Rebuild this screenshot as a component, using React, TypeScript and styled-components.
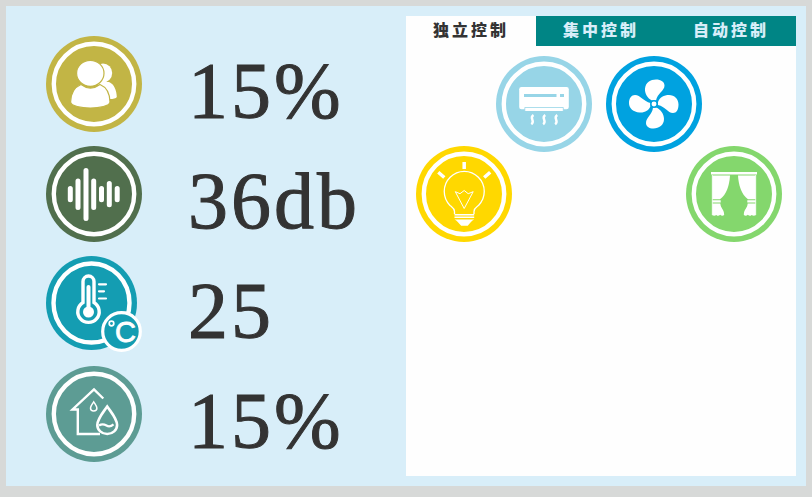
import React, { useState } from "react";
import styled, { createGlobalStyle } from "styled-components";

const GlobalStyle = createGlobalStyle`
  *, *::before, *::after { box-sizing: border-box; }
  body {
    margin: 0;
    background: #d7d9d8;
    color: #333;
    letter-spacing: 3px;
    font-family: "Liberation Sans", "Noto Sans CJK SC", sans-serif;
  }
`;

const Dashboard = styled.main`
  display: grid;
  grid-template-columns: minmax(0, 1fr) minmax(0, 1fr);
  margin: 6px;
  background: #d8eef9;
`;

const Readings = styled.ul`
  display: flex;
  flex-direction: column;
  gap: 14px;
  margin: 0;
  padding: 30px 0 24px 40px;
  list-style: none;
`;

const Reading = styled.li`
  display: flex;
  align-items: center;
  gap: 46px;
`;

const ReadingValue = styled.span`
  padding-top: 14px;
  font: 80px/82px "Liberation Serif", serif;
  -webkit-text-stroke: 1px currentColor;
  white-space: nowrap;
`;

const Badge = styled.svg`
  display: block;
  flex: none;
  width: 96px;
  height: 96px;
`;

const ControlPanel = styled.section`
  margin: 10px 10px 10px 0;
  background: #fefefe;
`;

const Tabs = styled.div`
  display: grid;
  grid-template-columns: repeat(3, 1fr);
`;

const Tab = styled.button<{ $active: boolean }>`
  height: 30px;
  padding: 0 0 4px;
  border: 0;
  background: ${(p) => (p.$active ? "#fefefe" : "#008585")};
  color: ${(p) => (p.$active ? "#333" : "#d8eef9")};
  font: 900 16px/26px "Noto Sans CJK SC", sans-serif;
  letter-spacing: inherit;
  cursor: pointer;
`;

const Devices = styled.div`
  padding: 10px 14px 10px 10px;
`;

const DeviceRow = styled.div<{ $spread?: boolean }>`
  display: flex;
  justify-content: ${(p) => (p.$spread ? "space-between" : "center")};
  gap: 14px;
  margin-top: ${(p) => (p.$spread ? "-6px" : "0")};
`;

const DeviceButton = styled.button`
  padding: 0;
  border: 0;
  border-radius: 50%;
  background: none;
  cursor: pointer;
`;

function RoundIcon({ color, children }: { color: string; children: React.ReactNode }) {
  return (
    <Badge viewBox="0 0 96 96" aria-hidden="true">
      <circle cx="48" cy="48" r="48" fill={color} />
      <circle cx="48" cy="48" r="40.2" fill="none" stroke="#fff" strokeWidth="4.4" />
      {children}
    </Badge>
  );
}

function PeopleIcon() {
  const c = "#c2b545";
  return (
    <RoundIcon color={c}>
      <g fill="#fff">
        <ellipse cx="57" cy="37" rx="9.2" ry="9.5" />
        <path d="M52 46h11c5 2 7.500 8 7.800 15-.8 1.600-3.500 2-7 2H52z" />
        <g stroke={c} strokeWidth="1.200">
          <path d="M35 48.500C29 51 24.800 57 24.600 66c0 4 11 6 19.700 6s19.700-2 19.700-6c-.2-9-4-15-10-17.500-6 4.500-13 4.500-19 0z" />
          <ellipse cx="44.300" cy="37.300" rx="13.700" ry="13" />
        </g>
      </g>
    </RoundIcon>
  );
}

function SoundIcon() {
  return (
    <RoundIcon color="#516f4d">
      <path
        d="M24.300 42.500v11.300M32 35v26.500M40 24.500v48M47.700 35v26.500M55.500 42.500v11.300M63.300 37.500v21.300M71.200 42.500v11.300"
        stroke="#fff"
        strokeWidth="5"
        strokeLinecap="round"
      />
    </RoundIcon>
  );
}

function TemperatureIcon() {
  const c = "#149db2";
  return (
    <Badge viewBox="0 0 96 96" aria-hidden="true">
      <ellipse cx="45.500" cy="47" rx="45.500" ry="47" fill={c} />
      <ellipse cx="45.500" cy="47" rx="38" ry="39.500" fill="none" stroke="#fff" strokeWidth="4.400" />
      <path
        d="M37 46.500V25.500a5.500 5.500 0 0 1 11 0v21a10.700 10.700 0 1 1-11 0z"
        fill="none"
        stroke="#fff"
        strokeWidth="3.400"
      />
      <path d="M42.500 31v23" stroke="#fff" strokeWidth="4" strokeLinecap="round" />
      <circle cx="42.500" cy="56" r="5.500" fill="#fff" />
      <path d="M53 28.300h7M53 35.300h5M53 42.500h7" stroke="#fff" strokeWidth="2.200" strokeLinecap="round" />
      <circle cx="75.500" cy="75.500" r="18.800" fill={c} stroke="#fff" strokeWidth="3.200" />
      <circle cx="65.500" cy="67.500" r="2.300" fill="none" stroke="#fff" strokeWidth="1.700" />
      <text
        x="69"
        y="86"
        fill="#fff"
        stroke="#fff"
        strokeWidth="0.800"
        fontFamily="Liberation Sans, sans-serif"
        fontSize="29"
      >
        C
      </text>
    </Badge>
  );
}

function HumidityIcon() {
  const c = "#5d9c94";
  return (
    <RoundIcon color={c}>
      <g fill="none" stroke="#fff" strokeWidth="2.600">
        <path d="M57.300 32.500L48 23.300 26.500 43.500h5.300V68H54" strokeWidth="2.400" />
        <path d="M47.700 35.800c-2 3-3.200 4.300-3.200 6.200a3.200 3 0 0 0 6.400 0c0-1.900-1.200-3.200-3.200-6.200z" strokeWidth="1.500" />
        <path d="M61.200 40.500C56 48 51.300 53 51.300 59a9.900 9 0 0 0 19.800 0c0-6-4.700-11-9.900-18.500z" fill={c} />
        <path d="M53 59.500c3-2 5-1.500 7.500 0s4.500 1 7-1.200" strokeWidth="2.200" />
      </g>
    </RoundIcon>
  );
}

function AirConditionerIcon() {
  const c = "#97d5e7";
  return (
    <RoundIcon color={c}>
      <path d="M25.500 31h45a2.300 2.300 0 0 1 2.300 2.300V51a2.300 2.300 0 0 1-2.300 2.300h-45a2.300 2.300 0 0 1-2.300-2.300V33.300a2.300 2.300 0 0 1 2.300-2.300z" fill="#fff" />
      <path d="M28 38h32.500v3H28zM64 38h4v3h-4z" fill={c} />
      <path d="M28.800 55V51.500h38.500V55" fill="#fff" stroke={c} strokeWidth="0.800" />
      <path
        d="M37.500 59c-5 3 2.500 6-2.200 9.300M49.300 59c-5 3 2.500 6-2.200 9.300M61.300 59c-5 3 2.500 6-2.200 9.300"
        fill="none"
        stroke="#fff"
        strokeWidth="2.400"
      />
    </RoundIcon>
  );
}

function FanIcon() {
  const c = "#00a2e0";
  return (
    <RoundIcon color={c}>
      <g fill="#fff">
        <path d="M46 44.500C41.500 42.500 38.500 37 39 32.500c.5-6 5.500-9 11-9 5 0 8.500 2.500 8.500 6 0 5.500-7 7.500-8.500 15z" />
        <path d="M52 46c1.500-4.500 6-7 11-7 5.500 0 9.500 4 9.500 9.500 0 5-2 8.500-5.500 8.500-5.500 0-7.500-6.500-15-8z" />
        <path d="M50 51.500c5 2 8 6.500 8 11.500 0 6-5 9.500-10.500 9.500-4.500 0-7.500-2-7.500-5.500 0-5.500 6.500-8.500 7-15.500z" />
        <path d="M44.500 50c-1.500 4.500-6 7-11 6.500-6-.5-10.500-4-10.500-9.500 0-5 2.500-8 6-8 5.500 0 8.500 6.500 15.500 8z" />
        <circle cx="48" cy="48" r="3.200" stroke={c} strokeWidth="1.500" />
      </g>
    </RoundIcon>
  );
}

function LightIcon() {
  return (
    <RoundIcon color="#ffd800">
      <g fill="none" stroke="#fff">
        <path d="M48.200 16v7M22.300 26.300l6 5.200M74.200 26.300l-6 5.200" strokeWidth="3.500" />
        <path d="M38.500 68v-2.500c0-3-2-4-4.500-6a20 20 0 1 1 28.500 0c-2.500 2-4.500 3-4.500 6V68" strokeWidth="1.300" />
        <path d="M39.300 45.700L48.200 62.500l9-16.800-5 2-4-3.200-4.200 3.200z" strokeWidth="1" />
        <path d="M38.500 68.700h19.700M38.500 71.200h19.700" strokeWidth="1.600" />
      </g>
      <path d="M38.500 73.500h19.700c-2.500 1.200-4 3.500-6.500 6.200h-6.500c-2.700-2.700-4.200-5-6.700-6.200z" fill="#fff" />
    </RoundIcon>
  );
}

function CurtainIcon() {
  return (
    <RoundIcon color="#84d76d">
      <g fill="#fff">
        <path d="M25 26h46v2.600H25z" />
        {[undefined, "translate(96 0) scale(-1 1)"].map((side, i) => (
          <g key={i} transform={side}>
            <path d="M26.300 29.500H44C43.500 39 40.500 49 34 53.200h-7.700z" />
            <path d="M26.300 54.200h8.400v2.300h-8.400zM26.300 57.500h8c.5 5.500 3.700 5 3.900 11.500-1.600 1-2.800.8-4-.3-1.500 1.400-2.700 1.400-3.800.2-1.400 1-2.700 1-4.100.3z" />
            <path d="M26.300 29v40" stroke="#fff" strokeWidth="0.800" />
          </g>
        ))}
      </g>
    </RoundIcon>
  );
}

const readings = [
  { label: "人数", value: "15%", Icon: PeopleIcon },
  { label: "噪音", value: "36db", Icon: SoundIcon },
  { label: "温度", value: "25", Icon: TemperatureIcon },
  { label: "湿度", value: "15%", Icon: HumidityIcon },
];

const tabs = ["独立控制", "集中控制", "自动控制"];

export default function App() {
  const [active, setActive] = useState(0);
  return (
    <>
      <GlobalStyle />
      <Dashboard>
        <Readings>
          {readings.map(({ label, value, Icon }) => (
            <Reading key={label} aria-label={label}>
              <Icon />
              <ReadingValue>{value}</ReadingValue>
            </Reading>
          ))}
        </Readings>
        <ControlPanel>
          <Tabs role="tablist">
            {tabs.map((name, i) => (
              <Tab
                key={name}
                type="button"
                role="tab"
                aria-selected={i === active}
                $active={i === active}
                onClick={() => setActive(i)}
              >
                {name}
              </Tab>
            ))}
          </Tabs>
          <Devices role="tabpanel">
            <DeviceRow>
              <DeviceButton type="button" aria-label="空调"><AirConditionerIcon /></DeviceButton>
              <DeviceButton type="button" aria-label="风扇"><FanIcon /></DeviceButton>
            </DeviceRow>
            <DeviceRow $spread>
              <DeviceButton type="button" aria-label="灯光"><LightIcon /></DeviceButton>
              <DeviceButton type="button" aria-label="窗帘"><CurtainIcon /></DeviceButton>
            </DeviceRow>
          </Devices>
        </ControlPanel>
      </Dashboard>
    </>
  );
}
